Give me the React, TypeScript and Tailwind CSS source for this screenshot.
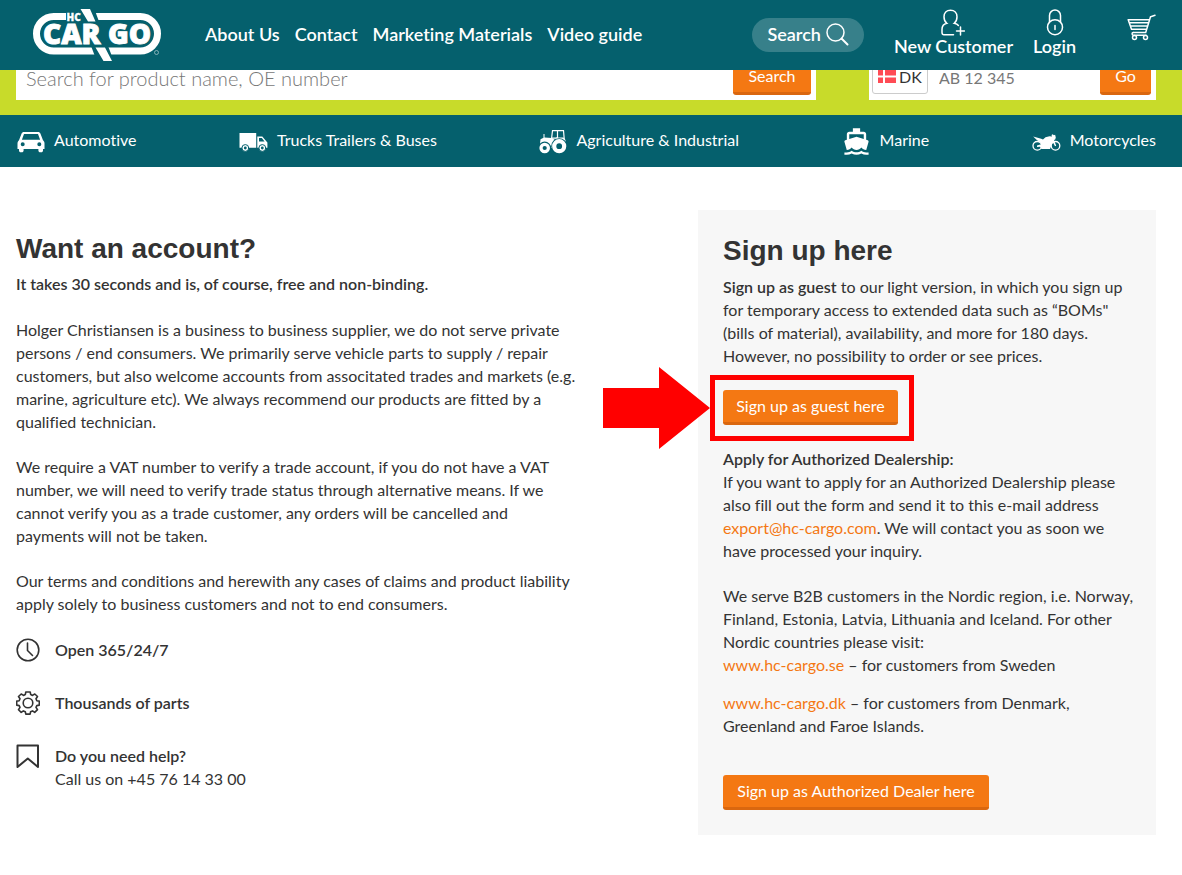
import type { ReactNode } from "react";
import { MdDirectionsBoat } from "react-icons/md";

function Logo() {
  return (
    <svg width="130" height="54" viewBox="0 0 130 54" fill="none" aria-label="HC Cargo" role="img">
      <rect x="4.500" y="8.500" width="121" height="34.500" rx="17.200" stroke="#fff" strokeWidth="7" />
      <path d="M34 2h22v11H34z" fill="#05606d" />
      <path d="M45 0h17l20 54H65z" fill="#05606d" />
      <path d="M48.500 1h9.500l5.500 12.500H56zM63.500 39.500h9.500L80 53h-8.500z" fill="#fff" />
      <g fill="#fff" stroke="#fff" fontFamily="'Open Sans', sans-serif" fontWeight="800">
        <text x="34.500" y="12.500" fontSize="10" strokeWidth=".3">
          HC
        </text>
        <text x="11" y="36" fontSize="28" strokeWidth=".9">
          CAR
        </text>
        <text x="76" y="36" fontSize="28" strokeWidth=".9">
          GO
        </text>
      </g>
      <circle cx="124.500" cy="44.500" r="2" stroke="#9bbfc4" strokeWidth=".8" />
    </svg>
  );
}

function SearchIcon() {
  return (
    <svg width="23" height="23" viewBox="0 0 23 23" fill="none" stroke="#fff" strokeWidth="1.500" strokeLinecap="round">
      <circle cx="9.500" cy="9.500" r="8.500" />
      <path d="M15.500 15.500l6 6" strokeWidth="2" />
    </svg>
  );
}

function UserPlusIcon() {
  return (
    <svg width="24" height="27" viewBox="0 0 24 27" fill="none" stroke="#fff" strokeWidth="1.500" strokeLinecap="round">
      <path d="M9.500 1.200c4 0 6.500 2.800 6.500 6.600 0 3-1.300 5.400-2.800 6.500 2 .5 3.300 1 4.200 2.200M9.500 1.200C5.500 1.200 3 4 3 7.800c0 3 1.300 5.400 2.800 6.500C2 15.200 1 17 1 20.500v3C1 25 1.600 25.800 3 25.800h9.500" />
      <path d="M19.500 18v8M15.500 22h8" />
    </svg>
  );
}

function LockIcon() {
  return (
    <svg width="18" height="27" viewBox="0 0 18 27" fill="none" stroke="#fff" strokeWidth="1.500" strokeLinecap="round">
      <circle cx="9" cy="18.200" r="7.500" />
      <path d="M3.500 13V6.500a5.500 5.500 0 0 1 11 0V13M9 16.500v4" />
    </svg>
  );
}

function CartIcon() {
  return (
    <svg width="29" height="27" viewBox="0 0 29 27" fill="none" stroke="#fff" strokeWidth="1.500" strokeLinecap="round">
      <path d="M28 1.200l-4.500 1.600L18.700 18.500H6.200M1.200 5.800h21.200M1.200 5.800l3.300 9.500h15M2.200 8.800h19.300M3.300 12h17" />
      <circle cx="7.500" cy="23.500" r="2" />
      <circle cx="18.500" cy="23.500" r="2" />
      <path d="M6.200 18.500c-1.500 0-1.500 2.500 0 2.700h13" />
    </svg>
  );
}

function CarIcon() {
  return (
    <svg width="28" height="22" viewBox="0 0 28 22">
      <path fill="#fff" fillRule="evenodd" d="M7 1h14c1.300 0 2 .5 2.400 1.600L26 9.200c1 .8 1.500 1.800 1.500 3.200V18H26v1.500c0 1-.7 1.800-1.800 1.800h-1c-1 0-1.800-.8-1.800-1.800V18H6.600v1.500c0 1-.8 1.800-1.800 1.800h-1c-1 0-1.800-.8-1.800-1.800V18H.5v-5.600c0-1.400.5-2.400 1.500-3.200l2.600-6.600C5 1.500 5.700 1 7 1zM7 3L4.900 8.800h18.200L21 3zM5.700 11.200a2 2 0 1 0 0 4 2 2 0 0 0 0-4zM22.300 11.200a2 2 0 1 0 0 4 2 2 0 0 0 0-4z" />
    </svg>
  );
}

function TruckIcon() {
  return (
    <svg width="29" height="20" viewBox="0 0 29 20">
      <path fill="#fff" d="M.5 1h16.700v14.800H.5zM18.300 4.500h5l4.200 5 .9 1v5.300H18.300z" />
      <path fill="#05606d" d="M20 6h2.800l2.800 3.500H20z" />
      <g fill="#fff" stroke="#05606d">
        <circle cx="6.300" cy="16" r="3.400" />
        <circle cx="23.300" cy="16" r="3.400" />
      </g>
      <g fill="#05606d">
        <circle cx="6.300" cy="16" r="1.400" />
        <circle cx="23.300" cy="16" r="1.400" />
      </g>
    </svg>
  );
}

function TractorIcon() {
  return (
    <svg width="28" height="25" viewBox="0 0 28 25" fill="none">
      <path fill="#fff" d="M1.500 10.200l3-1.500V5h1v3.500l7.500.5 3 2v8H9.500L1 15z" />
      <path stroke="#fff" strokeWidth="1.200" d="M12.500 10l1-8.300h11l.8 9M18.500 2v7M13 9.200h6" />
      <path fill="#fff" d="M17 8.500h7.500l2 2.500v5H15z" />
      <circle cx="5.700" cy="19" r="4" stroke="#05606d" strokeWidth="5" />
      <circle cx="20.200" cy="17.200" r="5.500" stroke="#05606d" strokeWidth="5" />
      <circle cx="5.700" cy="19" r="3.700" fill="#05606d" stroke="#fff" strokeWidth="3.200" />
      <circle cx="20.200" cy="17.200" r="5" fill="#05606d" stroke="#fff" strokeWidth="4.200" />
    </svg>
  );
}

function MotorcycleIcon() {
  return (
    <svg width="29" height="18" viewBox="0 0 29 18" fill="none">
      <circle cx="5.300" cy="12.800" r="4.300" stroke="#fff" strokeWidth="1.300" />
      <circle cx="23.500" cy="12.800" r="4.300" stroke="#fff" strokeWidth="1.300" />
      <path
        fill="#fff"
        d="M1.200 3.600l8 2.200 1.800.7 2.500-2.200 4-1 2.500.3-.5-1.600 1.200-.8 1.200 1 1.200-.4.700 2.800-.6 2-1.200.5 2.200 5.700-1.200.5-2-3.800-1.500 2.500-1.500 4H9.500L8 13.700l-3 .3v-1.600l4.200-1.200-1-2-3.400-2.200z"
      />
    </svg>
  );
}

function ClockIcon() {
  return (
    <svg width="24" height="24" viewBox="0 0 24 24" fill="none" stroke="#333" strokeWidth="1.600" strokeLinecap="round">
      <circle cx="12" cy="12" r="10.800" />
      <path d="M11.500 5v7.500l5 5" />
    </svg>
  );
}

function GearIcon() {
  return (
    <svg width="24" height="24" viewBox="0 0 24 24" fill="none" stroke="#333" strokeWidth="1.600" strokeLinejoin="round">
      <circle cx="12" cy="12" r="4.800" />
      <path d="M9.800 1h4.400l.5 2.600 1.800.8L18.800 3 21.500 5.500 20 7.800l.8 1.900 2.500.4v4l-2.500.5-.8 1.800 1.500 2.300-2.800 2.700-2.200-1.500-1.900.8-.5 2.400H9.800l-.5-2.400-1.900-.8-2.200 1.500-2.700-2.700L4 16.400l-.8-1.800-2.500-.5v-4l2.500-.4L4 7.800 2.500 5.500 5.200 3l2.300 1.400 1.800-.8z" />
    </svg>
  );
}

function BookmarkIcon() {
  return (
    <svg width="24" height="24" viewBox="0 0 24 24" fill="none" stroke="#333" strokeWidth="2" strokeLinejoin="round">
      <path d="M1.500 1.500h20.500v21.500L11.800 14.500 1.500 23z" />
    </svg>
  );
}

const button =
  "inline-block rounded-[3px] border-b-[3px] border-[#da670f] bg-[#f47813] text-base font-normal text-white";

const categories: { label: string; icon: ReactNode }[] = [
  { label: "Automotive", icon: <CarIcon /> },
  { label: "Trucks Trailers & Buses", icon: <TruckIcon /> },
  { label: "Agriculture & Industrial", icon: <TractorIcon /> },
  { label: "Marine", icon: <MdDirectionsBoat size={29} /> },
  { label: "Motorcycles", icon: <MotorcycleIcon /> },
];

const navLinks = ["About Us", "Contact", "Marketing Materials", "Video guide"];

export default function App() {
  return (
    <div className="min-h-screen bg-white font-['Lato',sans-serif] text-base leading-[23px] text-[#333] [font-variant-ligatures:none]">
      <header className="relative z-10 flex h-[70px] items-center bg-[#05606d] pr-[26px] pl-8 text-lg font-semibold text-white">
        <a href="#home">
          <Logo />
        </a>
        <nav className="ml-[43px] flex gap-[15px] pb-[2px]">
          {navLinks.map((label) => (
            <a key={label} href="#nav" className="whitespace-nowrap">
              {label}
            </a>
          ))}
        </nav>
        <div className="ml-auto flex items-center">
          <button
            type="button"
            className="flex h-[34px] items-center gap-[5px] rounded-full bg-[#37808a] px-[15px] pb-[2px] font-semibold"
          >
            Search
            <SearchIcon />
          </button>
          <a href="#new" className="ml-[30px] flex flex-col items-center pb-[5px] leading-5">
            <UserPlusIcon />
            New Customer
          </a>
          <a href="#login" className="ml-5 flex flex-col items-center pb-[5px] leading-5">
            <LockIcon />
            Login
          </a>
          <a href="#cart" aria-label="Cart" className="mb-4 ml-[51px]">
            <CartIcon />
          </a>
        </div>
      </header>

      <div className="-mt-[14px] flex gap-[53px] bg-[#c8db2a] pr-[26px] pb-[15px] pl-4">
        <form className="flex h-11 flex-1 items-end bg-white pr-[5px] pb-[5px]">
          <input
            type="text"
            aria-label="Search products"
            placeholder="Search for product name, OE number"
            className="h-8 min-w-0 flex-1 pb-[2px] pl-[10px] text-xl font-light outline-none placeholder:text-[#777]"
          />
          <button type="button" className={`${button} h-[35px] w-[78px]`}>
            Search
          </button>
        </form>
        <form className="flex h-11 w-[287px] items-end bg-white pr-[5px] pb-[5px] pl-[3px]">
          <button
            type="button"
            className="mb-px flex h-[35px] w-14 items-center justify-center gap-[3px] rounded-[3px] border border-[#ccc]"
          >
            <svg width="18" height="13" viewBox="0 0 18 13">
              <path fill="#ff4b55" d="M0 0h5v5.500H0zM7 0h11v5.500H7zM0 7.500h5V13H0zM7 7.500h11V13H7z" />
            </svg>
            DK
          </button>
          <input
            type="text"
            aria-label="License plate"
            placeholder="AB 12 345"
            className="h-[34px] min-w-0 flex-1 pb-[2px] pl-[11px] outline-none placeholder:text-[#777]"
          />
          <button type="button" className={`${button} h-[35px] w-[51px]`}>
            Go
          </button>
        </form>
      </div>

      <nav className="flex h-[52px] items-center justify-between bg-[#05606d] pr-[26px] pl-[17px] text-white">
        {categories.map(({ label, icon }) => (
          <a key={label} href="#category" className="flex items-center gap-[9px] pt-px whitespace-nowrap">
            {icon}
            <span className="pb-1">{label}</span>
          </a>
        ))}
      </nav>

      <main className="flex items-start justify-between pt-[43px] pr-[26px] pb-10 pl-4">
        <section className="w-[566px] pt-[23px]">
          <h2 className="font-['Liberation_Sans',sans-serif] text-[28px] leading-8 font-bold">Want an account?</h2>
          <p className="mt-[7px] font-semibold">It takes 30 seconds and is, of course, free and non-binding.</p>
          <p className="mt-[23px]">
            Holger Christiansen is a business to business supplier, we do not serve private persons / end consumers. We
            primarily serve vehicle parts to supply / repair customers, but also welcome accounts from associtated trades
            and markets (e.g. marine, agriculture etc). We always recommend our products are fitted by a qualified
            technician.
          </p>
          <p className="mt-[22px] pr-3">
            We require a VAT number to verify a trade account, if you do not have a VAT number, we will need to verify
            trade status through alternative means. If we cannot verify you as a trade customer, any orders will be
            cancelled and payments will not be taken.
          </p>
          <p className="mt-[22px]">
            Our terms and conditions and herewith any cases of claims and product liability apply solely to business
            customers and not to end consumers.
          </p>
          <ul className="mt-[23px] flex flex-col gap-[29px]">
            <li className="flex gap-[15px]">
              <ClockIcon />
              <b className="font-semibold">Open 365/24/7</b>
            </li>
            <li className="flex gap-[15px]">
              <GearIcon />
              <b className="font-semibold">Thousands of parts</b>
            </li>
            <li className="flex gap-[15px]">
              <BookmarkIcon />
              <div>
                <b className="font-semibold">Do you need help?</b>
                <p>Call us on +45 76 14 33 00</p>
              </div>
            </li>
          </ul>
        </section>

        <section className="w-[458px] bg-[#f7f7f7] py-[25px] pr-3 pl-[25px]">
          <h2 className="font-['Liberation_Sans',sans-serif] text-[28px] leading-8 font-bold">Sign up here</h2>
          <p className="mt-2 pr-3">
            <b className="font-semibold">Sign up as guest</b> to our light version, in which you sign up for temporary
            access to extended data such as “BOMs" (bills of material), availability, and more for 180 days. However, no
            possibility to order or see prices.
          </p>
          <div className="relative mt-[23px] w-fit">
            <button type="button" className={`${button} h-[35px] w-[175px]`}>
              Sign up as guest here
            </button>
            <div className="pointer-events-none absolute -top-[15px] -right-4 -bottom-4 -left-[13px] border-[5px] border-[#f00]">
              <svg className="absolute -top-[13px] right-full mr-[5px]" width="107" height="82" viewBox="0 0 107 82">
                <path fill="#f00" d="M0 21h56V0l51 41-51 41V61H0z" />
              </svg>
            </div>
          </div>
          <p className="mt-[22px] pr-3">
            <b className="font-semibold">Apply for Authorized Dealership:</b>
            <br />
            If you want to apply for an Authorized Dealership please also fill out the form and send it to this e-mail
            address <a href="mailto:export@hc-cargo.com" className="text-[#f47813]">export@hc-cargo.com</a>. We will
            contact you as soon we have processed your inquiry.
          </p>
          <p className="mt-[22px]">
            We serve B2B customers in the Nordic region, i.e. Norway, Finland, Estonia, Latvia, Lithuania and Iceland.
            For other Nordic countries please visit:
            <br />
            <a href="#se" className="text-[#f47813]">www.hc-cargo.se</a> – for customers from Sweden
          </p>
          <p className="mt-[15px] pr-3">
            <a href="#dk" className="text-[#f47813]">www.hc-cargo.dk</a> – for customers from Denmark, Greenland and
            Faroe Islands.
          </p>
          <button type="button" className={`${button} mt-[38px] h-[35px] w-[266px]`}>
            Sign up as Authorized Dealer here
          </button>
        </section>
      </main>
    </div>
  );
}
